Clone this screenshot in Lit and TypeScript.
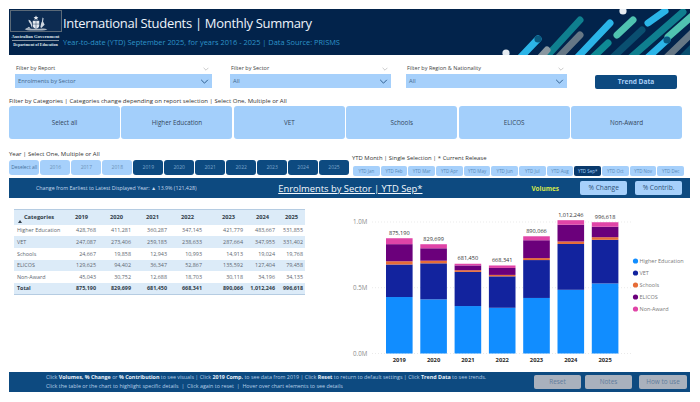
import { LitElement, html, css, svg } from "lit";
import { customElement } from "lit/decorators.js";

const YEARS = ["2019", "2020", "2021", "2022", "2023", "2024", "2025"];
const ROWS: [string, number[]][] = [
  ["Higher Education", [428768, 411281, 360287, 347145, 421779, 483667, 531855]],
  ["VET", [247087, 273406, 259185, 238633, 287664, 347955, 331402]],
  ["Schools", [24667, 19858, 12943, 10993, 14913, 19024, 19768]],
  ["ELICOS", [129625, 94402, 36347, 52867, 135592, 127404, 79458]],
  ["Non-Award", [45043, 30752, 12688, 18703, 30118, 34196, 34135]],
];
const TOTALS = [875190, 829699, 681450, 668341, 890066, 1012246, 996618];
const COLORS = ["#118DFF", "#12239E", "#E66C37", "#6B007B", "#E044A7"];
const fmt = (n: number) => n.toLocaleString("en-US");

const chevron = () => html`<svg viewBox="0 0 10 6"><path d="M1 1l4 4 4-4" fill="none" stroke="currentColor" stroke-width="1"/></svg>`;

const STRIPES: [number, number, number, number, string][] = [
  [580, 20, 547, 56, "#0f7f8f"],
  [538, 39, 518, 60, "#2bb5e8"],
  [547, 50, 538, 60, "#8a97a0"],
  [580, 35, 556, 60, "#667785"],
  [610, 23, 575, 60, "#2bb5e8"],
  [633, 20, 617, 35, "#4fc3b0"],
  [608, 43, 590, 60, "#0f8a95"],
  [642, 30, 610, 60, "#0a4f70"],
  [665, 11, 648, 23, "#2bb5e8"],
  [683, 12, 628, 60, "#0f7f8f"],
  [692, 16, 668, 37, "#4fc3b0"],
  [667, 40, 645, 60, "#2bb5e8"],
  [692, 33, 664, 60, "#667785"],
  [692, 48, 680, 60, "#0a4f70"],
];

@customElement("app-root")
export class AppRoot extends LitElement {
  static styles = css`
    :host { display: block; width: 700px; height: 402px; overflow: hidden; background: #fff; font-family: "Open Sans", "Noto Sans", sans-serif; color: #444; }
    .header { position: relative; margin: 9px 10px 0 9px; height: 46px; background: #02234b; overflow: hidden; display: flex; }
    .logo { width: 53px; flex: none; display: flex; flex-direction: column; align-items: center; }
    .crest { width: 52px; height: 22px; border: 1px solid #5b6a78; box-sizing: border-box; margin-top: 1px; background: #0d2c52; display: flex; justify-content: center; align-items: flex-end; }
    .crest svg { width: 26px; height: 16px; }
    .gov { font-family: "Liberation Serif", serif; font-weight: 700; font-size: 4.7px; line-height: 7px; color: #dfe5ec; margin-top: 1px; text-align: center; white-space: nowrap; border-bottom: 0.5px solid #8793a0; }
    .dept { font-family: "Liberation Serif", serif; font-weight: 700; font-size: 4.1px; line-height: 7px; color: #dfe5ec; text-align: center; white-space: nowrap; }
    .titles { margin-left: 1px; }
    .title { font-size: 13px; letter-spacing: -0.3px; line-height: 20px; margin-top: 4px; color: #eef4fb; white-space: nowrap; }
    .sub { font-size: 7.4px; line-height: 10px; margin-top: 4px; color: #2d93c8; white-space: nowrap; }
    .stripes { position: absolute; left: 0; top: 0; width: 681px; height: 46px; }

    .filters { display: flex; margin: 8px 0 0 15px; height: 26px; align-items: flex-end; }
    .f { position: relative; display: flex; flex-direction: column; height: 26px; }
    .f1 { width: 197px; margin-right: 18px; }
    .f2 { width: 161px; margin-right: 15px; }
    .f3 { width: 161px; margin-right: 28px; }
    .flabel { height: 11px; font-size: 5.5px; line-height: 9px; padding-left: 1px; color: #444; display: flex; justify-content: space-between; align-items: center; padding-right: 3px; }
    .flabel svg { width: 6px; height: 4px; color: #a8a8a8; }
    .select { height: 14px; background: #a6d0fb; font-size: 5.8px; line-height: 14px; padding: 0 3px; color: #44678c; display: flex; justify-content: space-between; align-items: center; }
    .select svg { width: 9px; height: 5px; color: #1a4a7c; }
    .trend { width: 82px; height: 13.5px; background: #0d4a80; border-radius: 2px; color: #a8cdf5; font-size: 6.6px; font-weight: 700; text-align: center; line-height: 13.5px; margin-bottom: 0.5px; }

    .catlabel { margin: 7px 0 0 9px; font-size: 6.05px; line-height: 10px; height: 10px; color: #333; white-space: nowrap; }
    .cats { display: flex; gap: 1.3px; margin: 0 0 0 9px; width: 673px; }
    .cat { flex: 1; height: 33px; background: #a3cffb; border-radius: 3px; font-size: 6.3px; color: #33475c; display: flex; align-items: center; justify-content: center; }

    .selectors { display: flex; margin: 0 0 0 9px; height: 39px; }
    .years { width: 340px; margin-right: 3px; }
    .ylabel { margin-top: 10px; height: 11px; font-size: 6px; line-height: 10px; color: #333; white-space: nowrap; }
    .ybtns { display: flex; gap: 1px; margin-top: 0; }
    .yb { width: 30px; height: 15px; border-radius: 3px; font-size: 5px; line-height: 15px; text-align: center; background: #a6d0fb; color: #6b90b8; }
    .yb.on { background: #0d4a80; color: #7ea6cc; }
    .yb.first { width: 30.5px; font-size: 4.9px; color: #46719c; white-space: nowrap; }
    .months { margin-top: 14px; width: 332px; }
    .mlabel { height: 11px; font-size: 5.9px; line-height: 10px; color: #333; }
    .mbtns { display: flex; gap: 1px; margin-top: 2px; margin-left: 1px; }
    .mb { flex: 1; height: 10px; border-radius: 2px; background: #a6d0fb; font-size: 4.5px; line-height: 10px; text-align: center; color: #5a8ab8; white-space: nowrap; }
    .mb.on { background: #0a3a6c; color: #a6d0fb; }

    .band { margin: 0 10px 0 9px; height: 20px; background: #0d4a80; position: relative; display: flex; align-items: center; }
    .change { width: 270px; padding-left: 27px; box-sizing: border-box; font-size: 5.3px; color: #c4d8ec; white-space: nowrap; }
    .btitle { width: 254px; font-size: 9.4px; color: #f2f7fc; text-decoration: underline; white-space: nowrap; }
    .vol { width: 49px; font-size: 6.4px; font-weight: 700; color: #d6e84a; }
    .pb { width: 47px; height: 14px; margin-right: 8px; border-radius: 2px; background: #a6d0fb; color: #2f5378; font-size: 6.6px; line-height: 14px; text-align: center; white-space: nowrap; }

    .main { display: flex; height: 174px; }
    .table { margin: 11px 0 0 14px; width: 291px; height: 86.5px; flex: none; display: grid; grid-template-columns: 48px 36px 35px 36px 35px 41px 32px 28px; grid-template-rows: 15.5px; grid-auto-rows: 11.7px; font-size: 5.4px; color: #5c6670; }
    .c { display: flex; align-items: center; justify-content: flex-end; padding-right: 2px; white-space: nowrap; }
    .c.l { justify-content: flex-start; padding: 0 0 0 3px; }
    .c.alt { background: #dcebf8; }
    .c.h { background: #dcebf8; border-top: 0.5px solid #b5cce2; font-weight: 700; color: #2f3c48; padding-right: 10px; font-size: 5.7px; }
    .c.h.y6 { padding-right: 8px; }
    .c.h.y7 { padding-right: 7px; }
    .c.h.l { padding: 0 0 0 10px; position: relative; }
    .sort { position: absolute; left: 4px; bottom: 1.5px; width: 4px; height: 3px; }
    .c.t { background: #dcebf8; font-weight: 700; color: #2f3c48; border-bottom: 0.5px solid #b5cce2; }
    .chart { margin-left: 35px; width: 360px; height: 174px; flex: none; }
    .chart text { font-family: "Open Sans", "Noto Sans", sans-serif; }

    .bottom { margin: 0 10px 0 9px; height: 20px; background: #0d4a80; display: flex; position: relative; }
    .help { width: 525px; padding: 1px 0 0 37px; box-sizing: border-box; font-size: 5.35px; line-height: 9px; color: #b7cfe8; white-space: nowrap; }
    .help b { color: #e8f1fa; }
    .gb { height: 14px; margin-top: 3px; border-radius: 2px; background: #a9b1bd; color: #5f7c9c; font-size: 6.4px; line-height: 14px; text-align: center; white-space: nowrap; }
    .g1 { width: 47px; margin-right: 4px; }
    .g2 { width: 47px; margin-right: 7px; }
    .g3 { width: 48px; }
  `;

  private chart() {
    const x0 = 386, pitch = 34.3, w = 26.6, base = 153.5, s = 131.7 / 1e6;
    const marks = [[1, 22], [0.5, 87.7], [0, 153.5]] as const;
    return html`<svg class="chart" viewBox="340 -2 360 174">
      ${marks.map(([v, y]) => svg`
        <line x1="372" x2="632" y1=${y} y2=${y} stroke="#d5d5d5" stroke-width="0.5" stroke-dasharray="1 2"/>
        <text x="353" y=${y + 2.3} font-size="6.2" fill="#8a8a8a">${v.toFixed(1)}${"M"}</text>`)}
      ${YEARS.map((yr, i) => {
        let y = base;
        const x = x0 + i * pitch;
        return svg`
          ${ROWS.map(([, vals], r) => {
            const h = vals[i] * s;
            y -= h;
            return svg`<rect x=${x} y=${y} width=${w} height=${h} fill=${COLORS[r]} />`;
          })}
          <text x=${x + w / 2} y=${base - TOTALS[i] * s - 3.5} text-anchor="middle" font-size="5.6" fill="#333">${fmt(TOTALS[i])}</text>
          <text x=${x + w / 2} y="161.5" text-anchor="middle" font-size="5.8" font-weight="700" fill="#2a2a2a">${yr}</text>`;
      })}
      ${ROWS.map(([n], i) => svg`
        <circle cx="635.5" cy=${61 + i * 12} r="2.6" fill=${COLORS[i]} />
        <text x="639.5" y=${63.2 + i * 12} font-size="5.5" fill="#7a7a7a">${n}</text>`)}
    </svg>`;
  }

  render() {
    return html`
      <div class="header">
        <div class="logo">
          <div class="crest">
            <svg viewBox="0 0 48 28">
              <path d="M24 0l1.4 3 3.1.4-2.3 2 .7 3-2.9-1.6-2.9 1.6.7-3-2.3-2 3.1-.4z" fill="#e4e9ef"/>
              <path d="M18 10h12v9c0 3-3 4.500-6 6-3-1.500-6-3-6-6z" fill="#e4e9ef"/>
              <path d="M24 10v15M18 16h12" stroke="#0d2c52" stroke-width="0.8"/>
              <path d="M16 22c-1-4-2-7-5-10l-1-4 3 1 3 4 1 5v5zM4 25c2-1 5-2 7-4l3 3z" fill="#cfd7e0"/>
              <path d="M32 22c1-4 1-8 3-11l1-7 2 1-1 6 3 6-3 3-3 3z" fill="#cfd7e0"/>
              <path d="M3 26c6-3 10-1 21-1s15-2 21 1c-6 2-13 2-21 2s-15 0-21-2z" fill="#aab5c1"/>
            </svg>
          </div>
          <div class="gov">Australian Government</div>
          <div class="dept">Department of Education</div>
        </div>
        <div class="titles">
          <div class="title">International Students | Monthly Summary</div>
          <div class="sub">Year-to-date (YTD) September 2025, for years 2016 - 2025 | Data Source: PRISMS</div>
        </div>
        <svg class="stripes" viewBox="9 9 681 46">
          ${STRIPES.map(([a, b, c, d, col]) => svg`<line x1=${a} y1=${b} x2=${c} y2=${d} stroke=${col} stroke-width="7" stroke-linecap="round"/>`)}
          <circle cx="538" cy="39" r="3.6" fill="#0a5a80"/>
          <circle cx="667" cy="40" r="3.6" fill="#0a5a80"/>
          <circle cx="623" cy="11" r="3.6" fill="#e6ecf2"/>
          <circle cx="506" cy="53" r="3.6" fill="#e6ecf2"/>
        </svg>
      </div>

      <div class="filters">
        <div class="f f1"><div class="flabel">Filter by Report ${chevron()}</div><div class="select">Enrolments by Sector ${chevron()}</div></div>
        <div class="f f2"><div class="flabel">Filter by Sector ${chevron()}</div><div class="select">All ${chevron()}</div></div>
        <div class="f f3"><div class="flabel">Filter by Region &amp; Nationality ${chevron()}</div><div class="select">All ${chevron()}</div></div>
        <div class="trend">Trend Data</div>
      </div>

      <div class="catlabel">Filter by Categories | Categories change depending on report selection | Select One, Multiple or All</div>
      <div class="cats">
        ${["Select all", "Higher Education", "VET", "Schools", "ELICOS", "Non-Award"].map((c) => html`<div class="cat">${c}</div>`)}
      </div>

      <div class="selectors">
        <div class="years">
          <div class="ylabel">Year | Select One, Multiple or All</div>
          <div class="ybtns">
            <div class="yb first">Deselect all</div>
            ${["2016", "2017", "2018"].map((y) => html`<div class="yb">${y}</div>`)}
            ${YEARS.map((y) => html`<div class="yb on">${y}</div>`)}
          </div>
        </div>
        <div class="months">
          <div class="mlabel">YTD Month | Single Selection | * Current Release</div>
          <div class="mbtns">
            ${["Jan", "Feb", "Mar", "Apr", "May", "Jun", "Jul", "Aug", "Sep*", "Oct", "Nov", "Dec"].map((m) => html`<div class="mb ${m === "Sep*" ? "on" : ""}">YTD ${m}</div>`)}
          </div>
        </div>
      </div>

      <div class="band">
        <div class="change">Change from Earliest to Latest Displayed Year: ▲ 13.9% (121,428)</div>
        <div class="btitle">Enrolments by Sector | YTD Sep*</div>
        <div class="vol">Volumes</div>
        <div class="pb">% Change</div>
        <div class="pb">% Contrib.</div>
      </div>

      <div class="main">
        <div class="table">
          <div class="c h l">Categories<svg class="sort" viewBox="0 0 4 3"><path d="M2 0l2 3H0z" fill="#2f3c48"/></svg></div>
          ${YEARS.map((y, i) => html`<div class="c h y${i + 1}">${y}</div>`)}
          ${ROWS.map(([n, vals], r) => html`
            <div class="c l ${r % 2 ? "alt" : ""}">${n}</div>
            ${vals.map((v) => html`<div class="c ${r % 2 ? "alt" : ""}">${fmt(v)}</div>`)}`)}
          <div class="c l t">Total</div>
          ${TOTALS.map((v) => html`<div class="c t">${fmt(v)}</div>`)}
        </div>
        ${this.chart()}
      </div>

      <div class="bottom">
        <div class="help">
          <div>Click <b>Volumes, % Change</b> or <b>% Contribution</b> to see visuals | Click <b>2019 Comp.</b> to see data from 2019 | Click <b>Reset</b> to return to default settings | Click <b>Trend Data</b> to see trends.</div>
          <div>Click the table or the chart to highlight specific details &nbsp;|&nbsp; Click again to reset &nbsp;|&nbsp; Hover over chart elements to see details</div>
        </div>
        <div class="gb g1">Reset</div>
        <div class="gb g2">Notes</div>
        <div class="gb g3">How to use</div>
      </div>
    `;
  }
}
